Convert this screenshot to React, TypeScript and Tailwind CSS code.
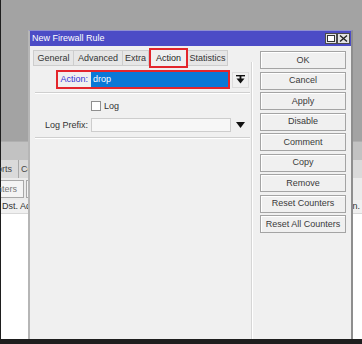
import React from "react";

const buttons = [
  "OK",
  "Cancel",
  "Apply",
  "Disable",
  "Comment",
  "Copy",
  "Remove",
  "Reset Counters",
  "Reset All Counters",
];

const tabs = [
  { label: "General", w: "w-[41px]", first: true },
  { label: "Advanced", w: "w-[49px]" },
  { label: "Extra", w: "w-[26px]" },
];

export default function App() {
  return (
    <div className="relative w-[362px] h-[344px] overflow-hidden bg-white flex flex-col font-['Liberation_Sans',Arial,sans-serif] text-[9px] leading-none text-[#333]">
      {/* background application */}
      <div className="flex flex-1 min-h-0">
        <div className="w-px bg-[#1e1e1e]" />
        <div className="flex-1 flex flex-col min-w-0">
          <div className="h-[141px] bg-[#a3a3a3]" />
          <div className="h-[19px] bg-[#c2c2c2] border-t border-[#b0b0b0]" />
          <div className="h-[18px] bg-[#dadada] flex items-center whitespace-nowrap text-[#444]">
            <div className="w-[18px] shrink-0 flex justify-end pr-[6px] border-r border-[#a8a8a8] h-full items-center">Service Ports</div>
            <div className="pl-[2px] shrink-0">Connections</div>
          </div>
          <div className="h-[22px] bg-[#ebebeb] flex items-center gap-[2px] whitespace-nowrap text-[#777]">
            <div className="w-[23px] shrink-0 h-[18px] flex justify-end items-center pr-[6px] border border-l-0 border-[#a8a8a8] bg-[#f4f4f4]">Reset Counters</div>
            <div className="w-[40px] shrink-0 h-[18px] border border-[#a8a8a8] bg-[#f4f4f4]" />
          </div>
          <div className="h-[14px] bg-[#f0f0f0] border-b border-[#d8d8d8] flex items-center whitespace-nowrap text-[#333]">
            <div className="w-[348px] shrink-0 pl-[1px]">Dst. Address</div>
            <div className="shrink-0 pl-[1px]">In. Interface</div>
          </div>
          <div className="flex-1 bg-white" />
        </div>
      </div>
      <div className="h-[5px] bg-[#1e1e1e]" />

      {/* dialog window */}
      <div className="absolute left-[28px] top-[30px] w-[325px] h-[309px] bg-[#f0f0f0] border-l-2 border-r-2 border-t border-l-[#b6b6b6] border-r-[#8e8e8e] border-t-[#9090d0] flex flex-col">
        {/* title bar */}
        <div className="h-[15px] bg-[#4c4cc6] flex items-center pl-[2px] text-white">
          <span>New Firewall Rule</span>
          <div className="ml-auto flex pr-px">
            <svg width="12" height="11" viewBox="0 0 12 11">
              <rect x="0.5" y="0.5" width="11" height="10" fill="#e4e4e4" stroke="#4a4a4a" />
              <rect x="2.5" y="2.5" width="7" height="6" fill="#fff" stroke="#333" />
            </svg>
            <svg width="13" height="11" viewBox="0 0 13 11">
              <rect x="0.5" y="0.5" width="12" height="10" fill="#e4e4e4" stroke="#4a4a4a" />
              <path d="M3 2.5 L10 8.5 M10 2.5 L3 8.5" stroke="#222" strokeWidth="1.4" />
            </svg>
          </div>
        </div>

        <div className="flex flex-1 min-h-0">
          {/* main area */}
          <div className="w-[221px] flex flex-col">
            {/* tabs */}
            <div className="mt-[2px] h-[20px] pl-[3px] flex items-center">
              {tabs.map((t) => (
                <div
                  key={t.label}
                  className={`${t.w} h-[16px] flex items-center justify-center bg-[#e6e6e6] border-y border-r border-[#cdcdcd] ${t.first ? "border-l" : ""}`}
                >
                  {t.label}
                </div>
              ))}
              <div className="w-[39px] h-[20px] flex items-center justify-center border-2 border-[#e3262c] bg-[#f0f0f0] text-[#222]">
                Action
              </div>
              <div className="w-[40px] h-[16px] flex items-center justify-center bg-[#e6e6e6] border-y border-r border-[#cdcdcd]">
                Statistics
              </div>
            </div>

            {/* Action row */}
            <div className="mt-[2px] flex items-center">
              <div className="ml-[26px] w-[174px] h-[19px] border-2 border-[#e3262c] flex items-center">
                <div className="w-[30px] flex justify-end text-[#3434d4]">Action:</div>
                <div className="ml-[3px] w-[137px] h-[15px] bg-[#0a78d6] flex items-center pl-[2px] text-white">drop</div>
              </div>
              <div className="ml-[2px] w-[17px] h-[16px] border border-[#dcdcdc] flex items-center justify-center">
                <svg width="9" height="9" viewBox="0 0 9 9">
                  <rect x="0" y="0" width="9" height="1.4" fill="#111" />
                  <rect x="3.6" y="1" width="1.8" height="3" fill="#111" />
                  <path d="M0.5 3.5 L8.5 3.5 L4.5 8.5 Z" fill="#111" />
                </svg>
              </div>
            </div>

            <div className="mt-[3px] ml-[5px] mr-[1px] border-t border-b border-t-[#cfcfcf] border-b-white" />

            {/* Log checkbox */}
            <div className="mt-[7px] flex items-center">
              <div className="ml-[61px] w-[10px] h-[10px] border border-[#8f8f8f] bg-white" />
              <span className="ml-[3px] text-[#333]">Log</span>
            </div>

            {/* Log Prefix */}
            <div className="mt-[7px] flex items-center">
              <div className="w-[58px] flex justify-end">Log Prefix:</div>
              <div className="ml-[3px] w-[140px] h-[14px] bg-[#f7f7f7] border border-[#cdcdcd]" />
              <svg className="ml-[5px]" width="9" height="6" viewBox="0 0 9 6">
                <path d="M0 0 L9 0 L4.5 6 Z" fill="#111" />
              </svg>
            </div>

            <div className="mt-[5px] ml-[5px] mr-[1px] border-t border-b border-t-[#cfcfcf] border-b-white" />
          </div>

          {/* separator */}
          <div className="mt-[16px] w-[2px] border-l border-r border-l-[#d6d6d6] border-r-white" />

          {/* buttons */}
          <div className="pl-[7px] pr-[5px] pt-[5px] flex flex-col gap-[2.5px]">
            {buttons.map((b) => (
              <div
                key={b}
                className="w-[86px] h-[18px] flex items-center justify-center border border-[#a4a4a4] bg-[#f0f0f0] shadow-[inset_1px_1px_0_#ffffff] text-[#3a3a3a]"
              >
                {b}
              </div>
            ))}
          </div>
        </div>
      </div>
    </div>
  );
}
